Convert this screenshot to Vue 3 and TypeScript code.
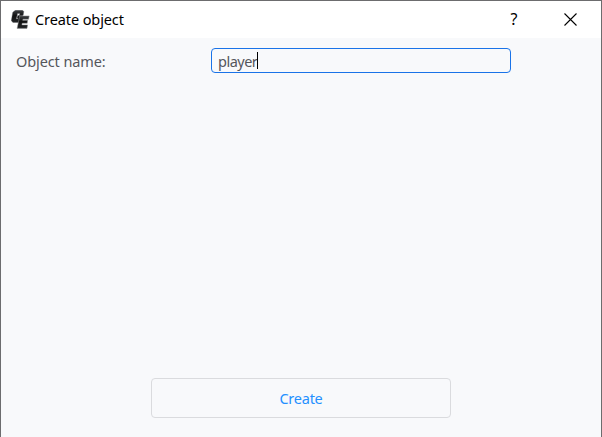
<script setup lang="ts">
import { ref } from 'vue'

const title = ref<string>('Create object')
const objectName = ref<string>('player')
</script>

<template>
  <div class="dialog">
    <header class="titlebar">
      <svg class="logo" viewBox="0 0 19 19" width="19" height="19" aria-hidden="true">
        <defs>
          <linearGradient id="metal" x1="0" y1="0" x2="0" y2="1">
            <stop offset="0" stop-color="#3c3f42" />
            <stop offset=".45" stop-color="#111" />
            <stop offset="1" stop-color="#222426" />
          </linearGradient>
        </defs>
        <path
          d="M4.4.2H11.4L12.8 1.4 12.1 5.4H8.5L8.8 3.6H6.5L5.3 9H6.5L6.8 8H6.1L6.7 5.5H11.4L10.2 12.4H2L.3 10.8 1.8 2.3Z"
          fill="url(#metal)" stroke="#55575a" stroke-width=".4"
        />
        <path
          d="M8.7 5.9H18.2L17.6 9.2H12L11.7 10.3H16.7L16.2 13.3H11.2L10.9 14.9H16.6L16 18.4H6.1Z"
          fill="url(#metal)" stroke="#8f9193" stroke-width=".5"
        />
      </svg>
      <h1 class="title">{{ title }}</h1>
      <button class="control help" type="button">?</button>
      <button class="control close" type="button" aria-label="Close">
        <svg viewBox="0 0 13 13" width="13" height="13">
          <path d="M.5.5 12.5 12.5M12.5.5.5 12.5" stroke="#000" stroke-width="1.1" />
        </svg>
      </button>
    </header>
    <main class="content">
      <div class="row">
        <span class="label">Object name:</span>
        <div class="field" role="textbox">
          <span class="value">{{ objectName }}</span><i class="caret"></i>
        </div>
      </div>
      <button class="create" type="button"><span>Create</span></button>
    </main>
  </div>
</template>

<style>
body {
  margin: 0;
  overflow: hidden;
}
</style>

<style scoped>
.dialog {
  box-sizing: border-box;
  width: 602px;
  height: 437px;
  display: flex;
  flex-direction: column;
  border: 1px solid #6c6c6e;
  border-bottom: 0;
  background: #f8f9fb;
  font-family: 'Noto Sans', 'Open Sans', sans-serif;
  font-size: 14.5px;
  color: #54565b;
}
button {
  margin: 0;
  padding: 0;
  border: 0;
  background: none;
  font: inherit;
}
.titlebar {
  display: flex;
  align-items: center;
  height: 37px;
  flex: none;
  padding-left: 10px;
  background: #fff;
  color: #000;
}
.logo {
  flex: none;
}
.title {
  flex: 1;
  margin: 0 0 2px 5px;
  font-size: 14.5px;
  font-weight: 400;
  line-height: 20px;
  letter-spacing: -0.1px;
}
.control {
  display: flex;
  align-items: center;
  justify-content: center;
  width: 57px;
  height: 37px;
}
.help {
  box-sizing: border-box;
  padding: 0 3px 2px 0;
  font-size: 16px;
}
.close {
  box-sizing: border-box;
  padding-right: 4px;
}
.content {
  flex: 1;
  display: flex;
  flex-direction: column;
  padding: 10px 90px 19px 15px;
}
.row {
  display: flex;
}
.label {
  width: 195px;
  line-height: 26px;
  height: 25px;
  letter-spacing: -0.1px;
}
.field {
  box-sizing: border-box;
  display: flex;
  align-items: center;
  width: 300px;
  height: 25px;
  padding-left: 6px;
  border: 1px solid #1a73e8;
  border-radius: 4px;
}
.value {
  width: 39px;
  line-height: 23px;
  padding-top: 2px;
  letter-spacing: -0.5px;
}
.caret {
  width: 1px;
  height: 17px;
  background: #000;
}
.create {
  box-sizing: border-box;
  width: 300px;
  height: 40px;
  margin: auto 0 0 135px;
  border: 1px solid #dadbde;
  border-radius: 4px;
  color: #2490ff;
  letter-spacing: -0.25px;
}
</style>
